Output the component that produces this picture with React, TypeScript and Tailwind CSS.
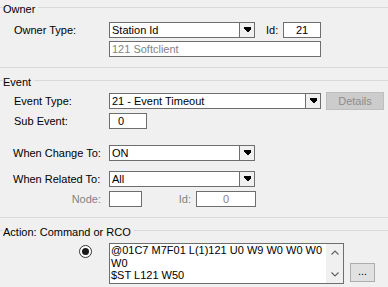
import React from "react"

const LINE = "bg-[#d9d9d9]"

function GroupHeader({ title }: { title: string }) {
  return (
    <div className="flex items-start h-[16px]">
      <div className={`w-[3px] h-px mt-[7px] ${LINE}`} />
      <span className="mt-[2px] leading-[14px] whitespace-nowrap">{title}</span>
      <div className={`flex-1 h-px mt-[7px] ml-[3px] ${LINE}`} />
    </div>
  )
}

function Separator() {
  return <div className={`h-px w-full ${LINE}`} />
}

function DropArrow() {
  return (
    <svg width="7" height="6" viewBox="0 0 7 6" shapeRendering="crispEdges">
      <path d="M0 0H7V2L4 5H3L0 2Z" fill="#000" />
    </svg>
  )
}

function Combo({ value, width }: { value: string; width: string }) {
  return (
    <div className={`flex h-[16px] border border-[#6e6e6e] bg-white ${width}`}>
      <span className="flex-1 pl-[2px] leading-[14px] whitespace-nowrap overflow-hidden">{value}</span>
      <div className="w-[15px] border-l border-[#6e6e6e] bg-[#f0f0f0] flex items-center justify-center">
        <DropArrow />
      </div>
    </div>
  )
}

function TextBox({
  value,
  className,
  muted,
}: {
  value: string
  className: string
  muted?: boolean
}) {
  return (
    <div
      className={`h-[16px] border border-[#6e6e6e] bg-white leading-[14px] whitespace-nowrap ${
        muted ? "text-[#838383]" : "text-black"
      } ${className}`}
    >
      {value}
    </div>
  )
}

function Label({ text, muted }: { text: string; muted?: boolean }) {
  return (
    <span className={`w-[95px] shrink-0 leading-[16px] ${muted ? "text-[#838383]" : ""}`}>
      {text}
    </span>
  )
}

function Chevron({ up }: { up?: boolean }) {
  return (
    <svg width="8" height="5" viewBox="0 0 8 5">
      <path
        d={up ? "M0.5 4.5L4 1L7.5 4.5" : "M0.5 0.5L4 4L7.5 0.5"}
        fill="none"
        stroke="#606060"
        strokeWidth="1.1"
      />
    </svg>
  )
}

export default function App() {
  return (
    <div
      className="w-[388px] h-[287px] overflow-hidden bg-[#f0f0f0] text-black text-[11px]"
      style={{ fontFamily: '"Liberation Sans", Arial, sans-serif' }}
    >
      {/* Owner */}
      <GroupHeader title="Owner" />
      <div className="flex items-center pl-[14px] mt-[6px]">
        <Label text="Owner Type:" />
        <Combo value="Station Id" width="w-[146px]" />
        <span className="ml-[11px] w-[17px] leading-[16px]">Id:</span>
        <TextBox value="21" className="w-[38px] text-center" />
      </div>
      <div className="flex pl-[109px] mt-[3px]">
        <TextBox value="121 Softclient" className="w-[212px] pl-[2px]" muted />
      </div>
      <div className="mt-[10px]">
        <Separator />
      </div>

      {/* Event */}
      <div className="mt-[5px]">
        <GroupHeader title="Event" />
      </div>
      <div className="flex items-center pl-[14px] mt-[4px]">
        <Label text="Event Type:" />
        <Combo value="21 - Event Timeout" width="w-[212px]" />
        <button className="ml-[5px] -my-px w-[58px] h-[18px] border border-[#bfbfbf] bg-[#cccccc] text-[#8d8d8d] leading-[16px]">
          Details
        </button>
      </div>
      <div className="flex items-center pl-[14px] mt-[4px]">
        <Label text="Sub Event:" />
        <TextBox value="0" className="w-[38px] pl-[8px]" />
      </div>
      <div className="flex items-center pl-[13px] mt-[16px]">
        <Label text="When Change To:" />
        <Combo value="ON" width="w-[146px] ml-px" />
      </div>
      <div className="flex items-center pl-[13px] mt-[10px]">
        <Label text="When Related To:" />
        <Combo value="All" width="w-[146px] ml-px" />
      </div>
      <div className="flex items-center mt-[4px]">
        <span className="w-[101px] text-right text-[#838383] leading-[16px]">Node:</span>
        <TextBox value="" className="ml-[8px] w-[33px]" />
        <span className="w-[49px] text-right text-[#838383] leading-[16px]">Id:</span>
        <TextBox value="0" className="ml-[5px] w-[60px] text-center" muted />
      </div>
      <div className="mt-[10px]">
        <Separator />
      </div>

      {/* Action */}
      <div className="mt-[5px]">
        <GroupHeader title="Action: Command or RCO" />
      </div>
      <div className="flex items-start pl-[79px] mt-[4px]">
        <div className="mt-[2px] w-[13px] h-[13px] rounded-full border border-[#333333] bg-white flex items-center justify-center">
          <div className="w-[7px] h-[7px] rounded-full bg-[#1a1a1a]" />
        </div>
        <div className="ml-[17px] w-[235px] h-[41px] border border-[#6e6e6e] bg-white flex">
          <div className="flex-1 pl-px leading-[12.5px] whitespace-nowrap overflow-hidden">
            <div>@01C7 M7F01 L(1)121 U0 W9 W0 W0 W0</div>
            <div>W0</div>
            <div>$ST L121 W50</div>
          </div>
          <div className="w-[17px] bg-[#f0f0f0] flex flex-col justify-between items-center py-[6px]">
            <Chevron up />
            <Chevron />
          </div>
        </div>
        <button className="self-end mb-[2px] ml-[6px] w-[25px] h-[19px] border border-[#adadad] bg-[#e1e1e1] leading-[14px] pb-[3px]">
          ...
        </button>
      </div>
    </div>
  )
}
